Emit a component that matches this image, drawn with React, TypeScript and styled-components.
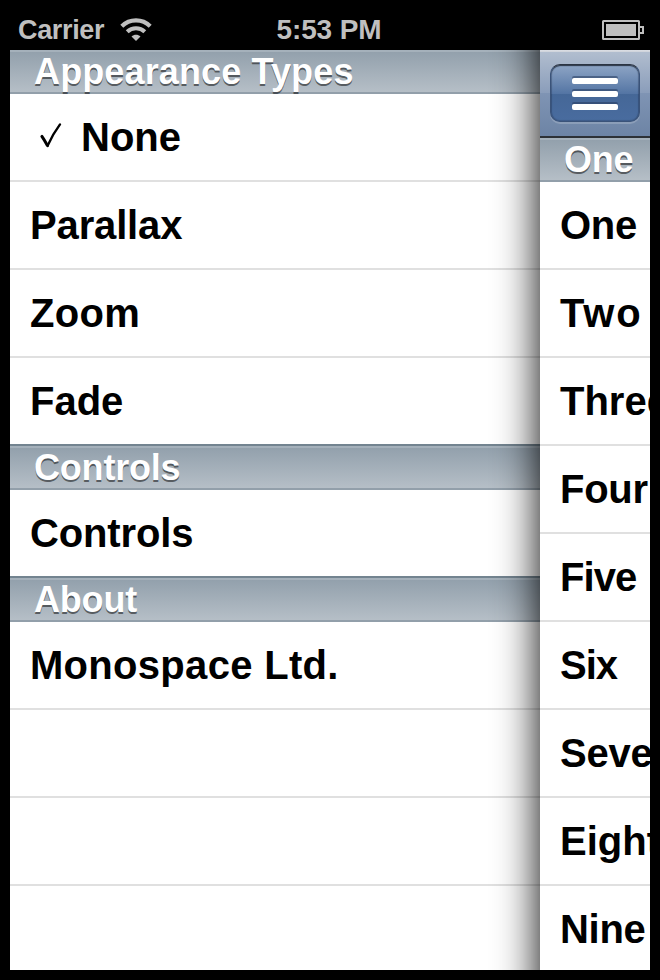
import React from 'react';
import styled, { createGlobalStyle } from 'styled-components';

const GlobalStyle = createGlobalStyle`
  * { box-sizing: border-box; }
  body { margin: 0; background: #000; }
`;

const Device = styled.div`
  width: 660px;
  height: 980px;
  padding: 10px;
  background: #000;
  display: flex;
  flex-direction: column;
  overflow: hidden;
  font-family: 'Liberation Sans', Arial, Helvetica, sans-serif;
  font-weight: 700;
`;

const StatusBar = styled.header`
  height: 40px;
  flex: none;
  display: grid;
  grid-template-columns: 1fr auto 1fr;
  align-items: center;
  padding: 0 6px 0 8px;
  color: #bfbfbf;
  font-size: 27px;
  line-height: 40px;
`;

const Carrier = styled.div`
  display: flex;
  align-items: center;
  gap: 16px;
  letter-spacing: -0.35px;
`;

const Clock = styled.div`
  font-size: 28px;
  letter-spacing: -0.1px;
  margin-right: 4px;
`;

const BatterySlot = styled.div`
  display: flex;
  justify-content: flex-end;
`;

const Screen = styled.main`
  height: 920px;
  display: flex;
  overflow: hidden;
  background: #fff;
`;

const Menu = styled.nav`
  width: 530px;
  flex: none;
`;

const Content = styled.section`
  width: 110px;
  flex: none;
  position: relative;
  background: #fff;

  &::before {
    content: '';
    position: absolute;
    inset: -60px 0;
    box-shadow: 0 0 44px #000;
  }
`;

const ContentClip = styled.div`
  position: relative;
  overflow: hidden;
  height: 100%;
  background: #fff;
`;

const SectionHeader = styled.h2<{ $pinned?: boolean }>`
  margin: 0;
  height: ${(p) => (p.$pinned ? 44 : 46)}px;
  padding-left: 24px;
  border-top: ${(p) => (p.$pinned ? 0 : 2)}px solid #738490;
  background:
    linear-gradient(#a5b1bb, #a5b1bb) top / 100% 2px no-repeat,
    linear-gradient(#929faa, #929faa) bottom / 100% 2px no-repeat,
    linear-gradient(#919fab, #b7c0c8);
  color: #fff;
  font-size: 36px;
  line-height: 44px;
  text-shadow: 0 2px 0 rgba(0, 0, 0, 0.5);
  white-space: nowrap;
`;

const Row = styled.div<{ $last?: boolean }>`
  height: ${(p) => (p.$last ? 86 : 88)}px;
  padding-left: 20px;
  border-bottom: ${(p) => (p.$last ? 0 : 2)}px solid #e0e0e0;
  color: #000;
  font-size: 40px;
  line-height: 87px;
  white-space: nowrap;
  display: flex;
`;

const Label = styled.span<{ $track?: number }>`
  letter-spacing: ${(p) => p.$track ?? 0}px;
`;

const CheckSlot = styled.span`
  width: 51px;
  flex: none;
  padding: 28px 0 0 9px;
  line-height: 0;
`;

const NavBar = styled.div`
  height: 88px;
  padding: 14px 10px;
  border-bottom: 2px solid #2d3136;
  background:
    linear-gradient(#dcdfe4, #cdd2da) top / 100% 2px no-repeat,
    linear-gradient(#b3bfd0 0%, #8a9dba 50%, #7f94b4 50%, #6d84a5 100%);
`;

const MenuButton = styled.button`
  width: 90px;
  height: 58px;
  padding: 13px 0 0;
  border: 1px solid #3a5379;
  border-top-color: #2c3543;
  border-radius: 10px;
  background: linear-gradient(#8ea5c5 0%, #5475a4 51%, #456797 51%, #496c9f 100%);
  box-shadow: inset 0 1px 1px rgba(20, 25, 35, 0.7), inset 0 0 1px 1px rgba(40, 60, 95, 0.35), 0 2px 0 rgba(255, 255, 255, 0.18);
  display: flex;
  flex-direction: column;
  align-items: center;
  gap: 7px;
`;

const Bar = styled.span`
  width: 46px;
  height: 6px;
  flex: none;
  border-radius: 2px;
  background: #fff;
  box-shadow: 0 -2px 0 rgba(40, 60, 95, 0.55);
`;

function WifiIcon() {
  return (
    <svg width="32" height="24" viewBox="0 0 32 24" fill="none" stroke="#bfbfbf">
      <path d="M1.8 8.2C9.7.4 22.3.4 30.2 8.2" strokeWidth="4.2" />
      <path d="M7.2 13.8c4.9-4.8 12.7-4.8 17.6 0" strokeWidth="4" />
      <path d="M11.5 18.5c2.5-2.4 6.5-2.4 9 0L16 23z" fill="#bfbfbf" stroke="none" />
    </svg>
  );
}

function BatteryIcon() {
  return (
    <svg width="43" height="20" viewBox="0 0 43 20">
      <rect x="2" y="1" width="36" height="18" rx=".5" fill="none" stroke="#bfbfbf" strokeWidth="2" />
      <rect x="5" y="4" width="30" height="12" fill="#bfbfbf" />
      <path d="M39 7h3v6h-3" fill="none" stroke="#bfbfbf" strokeWidth="2" />
    </svg>
  );
}

function CheckIcon() {
  return (
    <svg width="24" height="28" viewBox="0 0 24 28" fill="none" stroke="#000" strokeLinecap="round" strokeLinejoin="round">
      <path d="M2.9 14.4c2.6 3.8 4 6.4 5.6 9.2" strokeWidth="3" />
      <path d="M8.7 23.4C12.3 15.6 16.4 8.6 21 2.4" strokeWidth="2.4" />
    </svg>
  );
}

const pages: [string, number][] = [
  ['One', -0.3], ['Two', 1.8], ['Three', 0], ['Four', -0.3], ['Five', -0.9],
  ['Six', -1], ['Seven', -0.2], ['Eight', 0], ['Nine', -0.3],
];

export default function App() {
  return (
    <Device>
      <GlobalStyle />
      <StatusBar>
        <Carrier>Carrier<WifiIcon /></Carrier>
        <Clock>5:53 PM</Clock>
        <BatterySlot><BatteryIcon /></BatterySlot>
      </StatusBar>
      <Screen>
        <Menu>
          <SectionHeader $pinned><Label $track={0.13}>Appearance Types</Label></SectionHeader>
          <Row><CheckSlot><CheckIcon /></CheckSlot><Label>None</Label></Row>
          <Row><Label $track={-0.15}>Parallax</Label></Row>
          <Row><Label $track={0.3}>Zoom</Label></Row>
          <Row $last><Label>Fade</Label></Row>
          <SectionHeader><Label $track={-0.2}>Controls</Label></SectionHeader>
          <Row $last><Label $track={-0.15}>Controls</Label></Row>
          <SectionHeader><Label $track={-0.2}>About</Label></SectionHeader>
          <Row><Label $track={0.3}>Monospace Ltd.</Label></Row>
          <Row />
          <Row />
          <Row $last />
        </Menu>
        <Content>
          <ContentClip>
            <NavBar>
              <MenuButton aria-label="Menu"><Bar /><Bar /><Bar /></MenuButton>
            </NavBar>
            <SectionHeader $pinned><Label $track={-0.3}>One</Label></SectionHeader>
            {pages.map(([name, track]) => (
              <Row key={name}><Label $track={track}>{name}</Label></Row>
            ))}
          </ContentClip>
        </Content>
      </Screen>
    </Device>
  );
}
